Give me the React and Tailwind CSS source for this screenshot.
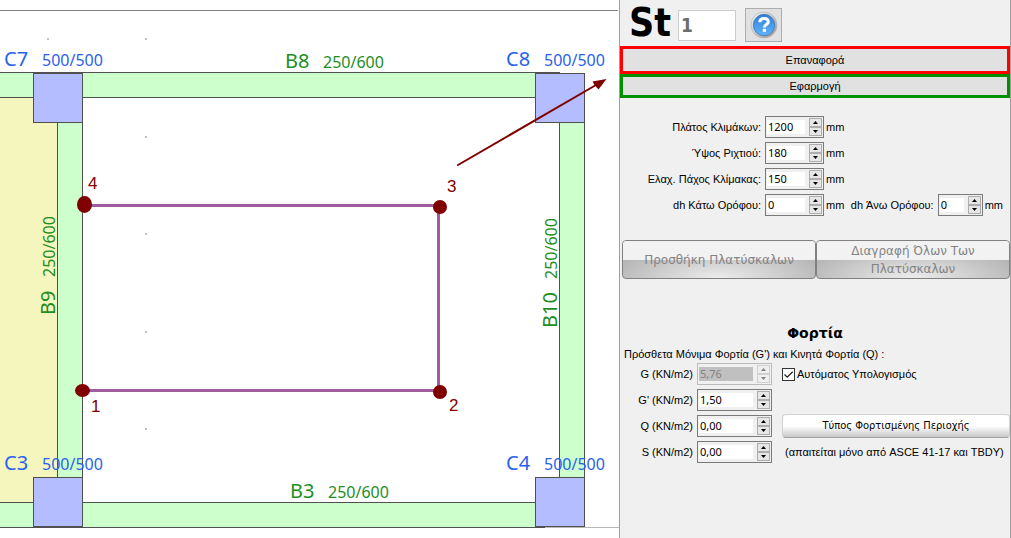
import React, { useState } from "react";

const INK = "#505050";
const BEAM = "#ccffcc";

function Spin({ id, label, value, width, disabled }) {
  const [v, setV] = useState(value);
  const decimal = value.includes(",");
  const step = (d) => {
    const n = parseFloat(v.replace(",", ".")) + d;
    setV(decimal ? n.toFixed(2).replace(".", ",") : String(n));
  };
  return (
    <span
      className={`flex h-[22px] shrink-0 items-center border bg-[#f0f0f0] pr-px pl-px ${width} ${
        disabled ? "border-[#bcbcbc]" : "border-[#7a7a7a]"
      }`}
    >
      <input
        id={id}
        aria-label={label}
        value={v}
        disabled={disabled}
        onChange={(e) => setV(e.target.value)}
        className="mr-1 h-[14px] min-w-0 flex-1 bg-white px-px font-['Noto_Sans'] text-[11px] leading-[14px] outline-none disabled:bg-[#c0c0c0] disabled:text-[#838383]"
      />
      <span className="flex h-[18px] w-[13px] shrink-0 flex-col">
        {[1, -1].map((d) => (
          <button
            key={d}
            type="button"
            disabled={disabled}
            aria-label={d > 0 ? "+" : "-"}
            onClick={() => step(d)}
            className="flex flex-1 items-center justify-center border border-[#adadad] bg-[#e6e6e6] text-black disabled:border-[#d0d0d0] disabled:bg-[#efefef] disabled:text-[#838383]"
          >
            <svg width="5" height="3" viewBox="0 0 5 3" fill="currentColor">
              <path d={d > 0 ? "M0 3 2.5 0 5 3Z" : "M0 0 2.5 3 5 0Z"} />
            </svg>
          </button>
        ))}
      </span>
    </span>
  );
}

function Column({ x, y, name, lx, ly }) {
  return (
    <g>
      <rect x={x + 0.5} y={y + 0.5} width="49" height="49" fill="#b3bdff" stroke={INK} />
      <g fill="#2a62ec">
        <text x={lx} y={ly} fontSize="20">{name}</text>
        <text x={lx + 38} y={ly} fontSize="16">500/500</text>
      </g>
    </g>
  );
}

function BeamLabel({ name, gap, ...rest }) {
  return (
    <g fill="#1e8e22" {...rest}>
      <text fontSize="20">{name}</text>
      <text x={gap} fontSize="16">250/600</text>
    </g>
  );
}

function Plan() {
  return (
    <svg
      viewBox="0 0 619 538"
      preserveAspectRatio="xMinYMin meet"
      className="block h-full w-full"
      fontFamily="'Noto Sans', sans-serif"
    >
      <path d="M0 10.5H618" stroke="#808080" />
      <g fill="#c0c0c0">
        <rect x="47" y="38" width="2" height="2" />
        <rect x="145" y="38" width="2" height="2" />
        <rect x="145" y="136" width="2" height="2" />
        <rect x="145" y="233" width="2" height="2" />
        <rect x="145" y="331" width="2" height="2" />
        <rect x="145" y="428" width="2" height="2" />
      </g>
      <rect y="98" width="57" height="404" fill="#f4f6be" />
      <g fill={BEAM}>
        <rect y="73" width="560" height="24" />
        <rect y="503" width="545" height="24" />
        <rect x="58" y="98" width="24" height="404" />
        <rect x="560" y="98" width="24" height="404" />
      </g>
      <path d="M545 527.5H619" stroke="#b8b8b8" />
      <path
        d="M0 72.5H560M0 97.5H535M0 502.5H535M0 527.5H545M57.5 98V502M82.5 98V527M559.5 98V502M584.5 98V502"
        stroke={INK}
        fill="none"
      />
      <Column x={33} y={73} name="C7" lx={4} ly={66} />
      <Column x={535} y={73} name="C8" lx={506} ly={66} />
      <Column x={33} y={477} name="C3" lx={4} ly={470} />
      <Column x={535} y={477} name="C4" lx={506} ly={470} />
      <BeamLabel name="B8" gap={38} transform="translate(285 68)" />
      <BeamLabel name="B3" gap={38} transform="translate(290 498)" />
      <BeamLabel name="B9" gap={38} transform="translate(55 315) rotate(-90)" />
      <BeamLabel name="B10" gap={49} transform="translate(557 328) rotate(-90)" />
      <path d="M84 205.5H438.5V390.5H82" fill="none" stroke="#9f5c9f" strokeWidth="3" />
      <g fill="#800000">
        <ellipse cx="84.5" cy="204.5" rx="7.5" ry="8.5" />
        <circle cx="440" cy="207" r="7" />
        <circle cx="440" cy="392" r="7" />
        <ellipse cx="82.5" cy="390.5" rx="7.5" ry="6.5" />
        <path d="M458 165 596 85" stroke="#800000" strokeWidth="2" strokeLinecap="round" />
        <path d="M606.5 79 592.5 81.5 594.5 85 598.5 89.5Z" />
        <g fontFamily="'Liberation Sans', sans-serif" fontSize="17">
          <text x="88" y="189">4</text>
          <text x="447" y="192">3</text>
          <text x="449" y="411">2</text>
          <text x="91" y="412">1</text>
        </g>
      </g>
    </svg>
  );
}

function HelpIcon() {
  return (
    <svg width="30" height="30" viewBox="0 0 30 30">
      <defs>
        <linearGradient id="rim" x1="0" y1="0" x2="1" y2="1">
          <stop offset="0" stopColor="#ffffff" />
          <stop offset="1" stopColor="#8c8c8c" />
        </linearGradient>
        <linearGradient id="face" x1="0" y1="0" x2="0" y2="1">
          <stop offset="0" stopColor="#2f7fd6" />
          <stop offset="1" stopColor="#62b4fa" />
        </linearGradient>
      </defs>
      <circle cx="15" cy="15" r="13" fill="url(#rim)" stroke="#b4b4b4" strokeWidth="0.7" />
      <circle cx="15" cy="15" r="10.7" fill="url(#face)" stroke="#3b78bd" strokeWidth="0.8" />
      <path
        d="M10.8 12.2C10.9 9.6 12.6 8.6 15.1 8.6 17.7 8.6 19.3 9.8 19.3 11.9 19.3 14.6 15.4 14.5 15.4 17.4"
        fill="none"
        stroke="#fff"
        strokeWidth="3"
      />
      <rect x="13.8" y="18.8" width="3.2" height="3" fill="#fff" />
    </svg>
  );
}

const dims = [
  { id: "width", label: "Πλάτος Κλιμάκων:", value: "1200" },
  { id: "riser", label: "Ύψος Ριχτιού:", value: "180" },
  { id: "thick", label: "Ελαχ. Πάχος Κλίμακας:", value: "150" },
  { id: "dhLow", label: "dh Κάτω Ορόφου:", value: "0" },
];

const glossy =
  "flex-1 rounded-[4px] border border-[#808080] bg-[radial-gradient(ellipse_60%_90%_at_50%_100%,#ececec,#b4b4b4)] font-['DejaVu_Sans'] text-[12px] leading-[18px] text-[#838383]";

function Load({ id, label, value, disabled, children }) {
  return (
    <div className="flex h-[26px] items-center">
      <label htmlFor={id} className="w-[77px] shrink-0 pr-1 text-right whitespace-nowrap">{label}</label>
      <Spin id={id} value={value} width="w-[75px]" disabled={disabled} />
      <div className="ml-[10px] flex flex-1 items-center">{children}</div>
    </div>
  );
}

export default function App() {
  return (
    <div className="flex min-h-screen bg-white font-['Liberation_Sans',sans-serif] text-[11px] leading-[14px] text-black">
      <main className="min-w-0 flex-1">
        <Plan />
      </main>
      <aside className="w-[392px] shrink-0 border-x border-[#a0a0a0] bg-[#f0f0f0]">
        <header className="flex h-[46px] items-center pl-[9px]">
          <label htmlFor="stair" className="w-[49px] font-['DejaVu_Sans_Condensed','DejaVu_Sans'] text-[39px] leading-[46px] font-bold">
            St
          </label>
          <input
            id="stair"
            defaultValue="1"
            disabled
            className="mt-1 h-[31px] w-[58px] border border-[#cccccc] bg-white px-[2px] font-['DejaVu_Sans_Condensed','DejaVu_Sans'] text-[19px] font-bold text-[#6d6d6d]"
          />
          <button type="button" aria-label="?" className="mt-1 ml-[9px] flex h-[34px] w-[37px] items-center justify-center border border-[#adadad] bg-[#e1e1e1]">
            <HelpIcon />
          </button>
        </header>
        <button type="button" className="block h-7 w-full border-3 border-[#ff0000] bg-[#e1e1e1]">Επαναφορά</button>
        <button type="button" className="block h-6 w-full border-3 border-[#009000] bg-[#e1e1e1]">Εφαρμογή</button>

        <section className="mt-4">
          {dims.map((d) => (
            <div key={d.id} className="flex h-[26px] items-center">
              <label htmlFor={d.id} className="w-[145px] shrink-0 pr-1 text-right whitespace-nowrap">{d.label}</label>
              <Spin id={d.id} value={d.value} width="w-[59px]" />
              <span className="ml-[2px]">mm</span>
              {d.id === "dhLow" && (
                <div className="ml-auto flex items-center pr-[7px]">
                  <label htmlFor="dhHigh" className="pr-1 whitespace-nowrap">dh Άνω Ορόφου:</label>
                  <Spin id="dhHigh" value="0" width="w-[45px]" />
                  <span className="ml-[2px]">mm</span>
                </div>
              )}
            </div>
          ))}
        </section>

        <div className="mt-[22px] flex h-[39px] pl-[2px]">
          <button type="button" disabled className={glossy}>
            <span className="flex h-full items-center justify-center rounded-t-[3px] bg-[linear-gradient(#f2f2f2_0_19px,transparent_19px)]">
              Προσθήκη Πλατύσκαλων
            </span>
          </button>
          <button type="button" disabled className={glossy}>
            <span className="flex h-full items-center justify-center rounded-t-[3px] bg-[linear-gradient(#f2f2f2_0_19px,transparent_19px)] px-6">
              Διαγραφή Όλων Των Πλατύσκαλων
            </span>
          </button>
        </div>

        <section className="mt-[44px]">
          <h2 className="text-center font-['DejaVu_Sans'] text-[14px] leading-5 font-bold">Φορτία</h2>
          <p className="mt-1 pl-1 whitespace-nowrap">Πρόσθετα Μόνιμα Φορτία (G') και Κινητά Φορτία (Q) :</p>
          <Load id="g" label="G (KN/m2)" value="5,76" disabled>
            <label className="flex items-center gap-[2px]">
              <input type="checkbox" defaultChecked className="peer sr-only" />
              <span className="flex size-[13px] items-center justify-center border border-[#333333] bg-white text-transparent peer-checked:text-[#222222]">
                <svg width="11" height="11" viewBox="0 0 11 11" fill="none" stroke="currentColor" strokeWidth="1.3">
                  <path d="M1.5 5.5 4.2 8.2 9.7 2.7" />
                </svg>
              </span>
              Αυτόματος Υπολογισμός
            </label>
          </Load>
          <Load id="gp" label="G' (KN/m2)" value="1,50" />
          <Load id="q" label="Q (KN/m2)" value="0,00">
            <button type="button" className="h-6 flex-1 rounded-[4px] border border-[#d0d0d0] border-b-[#a0a0a0] bg-linear-to-b from-white from-50% to-[#c8c8c8] font-['DejaVu_Sans_Condensed','DejaVu_Sans'] text-[11px]">
              Τύπος Φορτισμένης Περιοχής
            </button>
          </Load>
          <Load id="s" label="S (KN/m2)" value="0,00">
            <span className="pl-[3px] whitespace-nowrap">(απαιτείται μόνο από ASCE 41-17 και TBDY)</span>
          </Load>
        </section>
      </aside>
    </div>
  );
}
